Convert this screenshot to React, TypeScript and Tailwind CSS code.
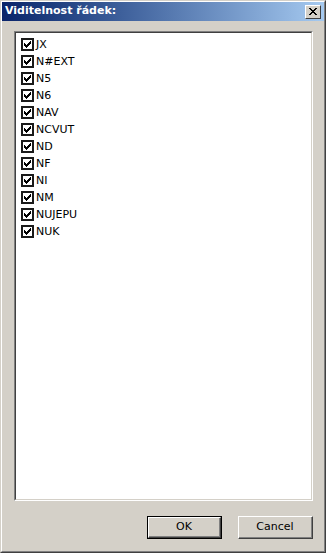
const ITEMS = ['JX', 'N#EXT', 'N5', 'N6', 'NAV', 'NCVUT', 'ND', 'NF', 'NI', 'NM', 'NUJEPU', 'NUK'];

const FONT = { fontFamily: 'Tahoma, "DejaVu Sans", "Liberation Sans", sans-serif' };

// classic 7x7 tick: each column is 3px tall
const TICK = [2, 3, 4, 3, 2, 1, 0];

function CheckBox() {
  return (
    <div className="w-[13px] h-[13px] border-2 border-[#1a1a1a] bg-white flex items-center justify-center shrink-0">
      <svg width="9" height="9" viewBox="0 0 9 9" shapeRendering="crispEdges">
        {TICK.map((y, x) => (
          <rect key={x} x={x + 1} y={y + 1} width="1" height="3" fill="#000" />
        ))}
      </svg>
    </div>
  );
}

function Button({ label, isDefault = false }: { label: string; isDefault?: boolean }) {
  const inner = (
    <div className="w-full h-full border-t border-l border-t-white border-l-white border-r border-b border-r-[#404040] border-b-[#404040]">
      <div className="w-full h-full border-r border-b border-r-[#808080] border-b-[#808080] flex items-center justify-center text-[11px] text-black">
        {label}
      </div>
    </div>
  );
  if (isDefault) {
    return <div className="w-[75px] h-[23px] border border-black">{inner}</div>;
  }
  return <div className="w-[75px] h-[23px]">{inner}</div>;
}

export default function App() {
  return (
    <div className="w-[326px] h-[553px] bg-[#d4d0c8] border border-t-[#d4d0c8] border-l-[#d4d0c8] border-r-[#404040] border-b-[#404040]" style={FONT}>
      <div className="w-full h-full flex flex-col border border-t-white border-l-white border-r-[#808080] border-b-[#808080]">
        {/* title bar */}
        <div className="h-[19px] flex items-center justify-between pl-[3px] pr-[3px] bg-gradient-to-r from-[#0a246a] to-[#a6caf0]">
          <span className="text-[11px] font-bold text-white">Viditelnost řádek:</span>
          <div className="w-[16px] h-[14px] bg-[#d4d0c8] border-t border-l border-t-white border-l-white border-r border-b border-r-[#404040] border-b-[#404040] flex items-center justify-center">
            <svg width="8" height="7" viewBox="0 0 8 7" shapeRendering="crispEdges">
              <path d="M0 0h2v1h1v1h2v-1h1v-1h2v1h-1v1h-1v1h-1v1h1v1h1v1h1v1h-2v-1h-1v-1h-2v1h-1v1h-2v-1h1v-1h1v-1h1v-1h-1v-1h-1v-1h-1z" fill="#000" />
            </svg>
          </div>
        </div>

        {/* body */}
        <div className="flex-1 flex flex-col pt-[10px] pl-[12px]">
          <div className="w-[299px] h-[470px] border border-t-[#808080] border-l-[#808080] border-r-white border-b-white">
            <div className="w-full h-full bg-white border border-t-[#404040] border-l-[#404040] border-r-[#d4d0c8] border-b-[#d4d0c8] pt-[3px] pl-[5px]">
              {ITEMS.map((item) => (
                <div key={item} className="h-[17px] flex items-center gap-[2px]">
                  <CheckBox />
                  <span className="text-[11px] text-black leading-none">{item}</span>
                </div>
              ))}
            </div>
          </div>

          <div className="flex justify-end gap-[16px] pr-[11px] mt-[15px]">
            <Button label="OK" isDefault />
            <Button label="Cancel" />
          </div>
        </div>
      </div>
    </div>
  );
}
